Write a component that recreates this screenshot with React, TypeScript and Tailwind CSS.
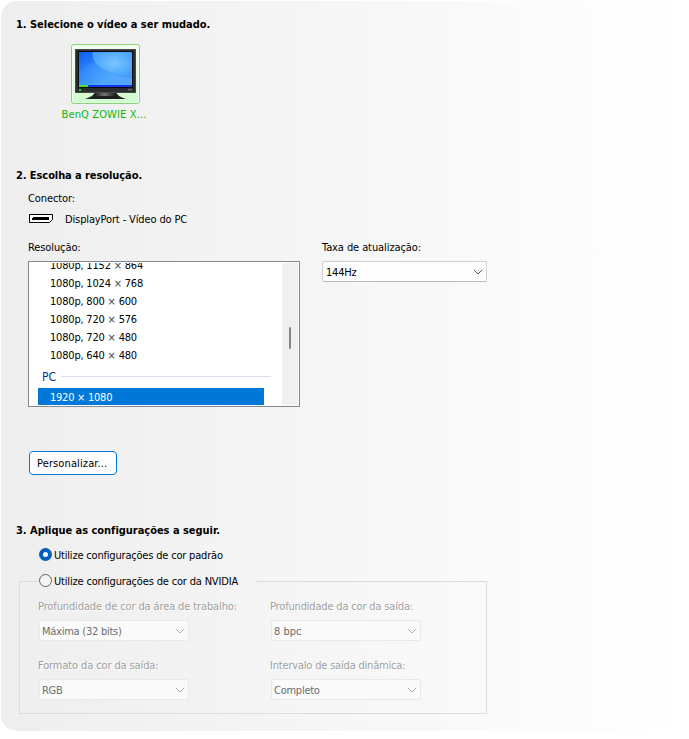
import type { ReactNode } from "react";

const resolutions: [string, string][] = [
  ["1080p, 1152", "864"],
  ["1080p, 1024", "768"],
  ["1080p, 800", "600"],
  ["1080p, 720", "576"],
  ["1080p, 720", "480"],
  ["1080p, 640", "480"],
];

function Chevron({ className }: { className: string }) {
  return (
    <svg width="10" height="6" viewBox="0 0 10 6" fill="none" className={className}>
      <path d="M0.8 0.8L5 5L9.2 0.8" stroke="currentColor" strokeWidth="1" />
    </svg>
  );
}

function Heading({ children, className }: { children: ReactNode; className: string }) {
  return <h2 className={`ml-[15px] h-4 text-[11px] leading-[18px] font-bold ${className}`}>{children}</h2>;
}

function DisabledField({ label, value, labelClass, valueClass }: { label: string; value: string; labelClass: string; valueClass: string }) {
  return (
    <div className="w-[232px] shrink-0">
      <div className={`h-4 text-[#a0a0a0] [text-shadow:1px_1px_0_#fff] ${labelClass}`}>{label}</div>
      <div className="mt-[6px] ml-px flex h-[21px] w-[150px] items-center justify-between rounded-[2px] border border-[#e9e9e9] bg-[#fafafa] pr-[3px] pl-[2px] text-[#6d6d6d]">
        <span className={`pt-[2px] ${valueClass}`}>{value}</span>
        <Chevron className="text-[#b0b0b0]" />
      </div>
    </div>
  );
}

function Monitor() {
  return (
    <svg width="61" height="50" viewBox="0 0 61 50">
      <defs>
        <linearGradient id="screen" x1="0" y1="0" x2="0.9" y2="1">
          <stop offset="0" stopColor="#0f5cf2" />
          <stop offset="0.35" stopColor="#2a84fb" />
          <stop offset="0.7" stopColor="#3f9ffc" />
          <stop offset="1" stopColor="#2f88f5" />
        </linearGradient>
        <radialGradient id="glow" cx="0.55" cy="0.45" r="0.6">
          <stop offset="0" stopColor="#7ac5ff" />
          <stop offset="1" stopColor="#42a0fc" />
        </radialGradient>
        <linearGradient id="sweep" x1="0" y1="0" x2="1" y2="0">
          <stop offset="0" stopColor="#7bbcff" stopOpacity="0.05" />
          <stop offset="1" stopColor="#7bc2ff" stopOpacity="0.5" />
        </linearGradient>
        <linearGradient id="stand" x1="0" y1="0" x2="1" y2="0">
          <stop offset="0" stopColor="#111" />
          <stop offset="0.45" stopColor="#777" />
          <stop offset="1" stopColor="#111" />
        </linearGradient>
        <clipPath id="clip">
          <rect x="4" y="3" width="53" height="35" />
        </clipPath>
      </defs>
      <path d="M20 43H41C42 46 45 48 51 50H10C16 48 19 46 20 43Z" fill="#202020" />
      <path d="M21 44H40L42 47H19Z" fill="url(#stand)" />
      <rect width="61" height="44" fill="#2b2c2e" />
      <rect x="0.5" y="0.5" width="60" height="43" fill="none" stroke="#48494c" />
      <rect x="3" y="2" width="55" height="37" fill="#0b0c12" />
      <g clipPath="url(#clip)">
        <rect x="4" y="3" width="53" height="35" fill="url(#screen)" />
        <path d="M18 3C15 13 27 25 57 28V3Z" fill="url(#glow)" />
        <path d="M4 22C10 17 15 14 20 13C25 20 37 27 57 29V36H4Z" fill="url(#sweep)" />
        <rect x="4" y="36" width="53" height="2" fill="#1238e8" />
        <rect x="4" y="36" width="9" height="2" fill="#4be22b" />
      </g>
      <rect x="4" y="40" width="2" height="2" fill="#1fd62c" />
      <rect x="53" y="40" width="4" height="1.5" fill="#666" />
    </svg>
  );
}

export default function App() {
  return (
    <main className="h-[739px] w-[689px] overflow-hidden bg-white pt-px pl-px font-['DejaVu_Sans_Condensed','DejaVu_Sans',sans-serif] text-[11px] leading-[18px] whitespace-nowrap text-black">
      <div className="flex h-[730px] flex-col rounded-l-[16px] bg-linear-to-r from-[#eeeeee] to-white pt-[15px]">
        <Heading className="tracking-[-0.03px]">1. Selecione o vídeo a ser mudado.</Heading>

        <div className="mt-[12px] ml-[54px] flex w-[100px] flex-col items-center">
          <div className="flex h-[60px] w-[69px] justify-center rounded-[3px] border border-[#86d773] bg-linear-to-b from-[#f2fff0] to-[#cffbcf] pt-[4px] shadow-[inset_0_0_0_1px_#f4fff3]">
            <Monitor />
          </div>
          <div className="mt-[2px] mr-[2px] h-4 tracking-[0.13px] text-[#0db80d]">BenQ ZOWIE X...</div>
        </div>

        <Heading className="mt-[45px] tracking-[-0.08px]">2. Escolha a resolução.</Heading>

        <div className="mt-[7px] ml-[27px] h-4 tracking-[-0.1px]">Conector:</div>
        <div className="mt-[5px] ml-[28px] flex h-4 items-center gap-[12px]">
          <svg width="24" height="9" viewBox="0 0 24 9" className="mb-px">
            <path d="M0.5 0.5H23.5V5.5L20.5 8.5H0.5Z" fill="#fff" stroke="#000" />
            <path d="M4 3H20V6H3V4H4Z" fill="#000" />
          </svg>
          <span className="pt-[2px] tracking-[-0.13px]">DisplayPort - Vídeo do PC</span>
        </div>

        <div className="mt-[12px] flex">
          <section className="ml-[27px] w-[294px]">
            <div className="h-4 tracking-[-0.1px]">Resolução:</div>
            <div className="mt-[6px] flex h-[146px] w-[272px] overflow-hidden border border-[#828790] bg-white p-px">
              <div className="h-[142px] w-[252px] overflow-hidden">
                <ul className="-mt-[7px]">
                  {resolutions.map(([mode, height], i) => (
                    <li key={i} className="h-[18px] pl-[20px] leading-[20px] tracking-[-0.2px]">
                      {mode} <span className="text-[#444]">×</span> {height}
                    </li>
                  ))}
                </ul>
                <div className="flex h-[24px] items-center gap-[5px] pl-[12px] text-[12px] text-[#003399]">
                  <span className="pt-[2px]">PC</span>
                  <div className="h-px w-[210px] bg-[#d5e0ec]" />
                </div>
                <div className="ml-[8px] h-[17px] w-[226px] bg-[#0078d7] pl-[12px] leading-[20px] tracking-[-0.25px] text-white">1920 × 1080</div>
              </div>
              <div className="flex h-[142px] w-[16px] justify-center bg-[#f0f0f0] pt-[64px]">
                <div className="h-[22px] w-[2px] rounded-full bg-[#858585]" />
              </div>
            </div>
          </section>
          <section>
            <div className="h-4 tracking-[-0.09px]">Taxa de atualização:</div>
            <div className="mt-[6px] flex h-[21px] w-[165px] items-center justify-between rounded-[2px] border border-[#d0d0d0] border-b-[#b8b8b8] bg-[#fdfdfd] pr-[3px] pl-[3px]">
              <span className="pt-[2px] tracking-[-0.2px]">144Hz</span>
              <Chevron className="text-[#5d5d5d]" />
            </div>
          </section>
        </div>

        <button className="mt-[44px] ml-[28px] flex h-[24px] w-[88px] shrink-0 items-center rounded-[4px] border border-[#0078d4] bg-[#fdfdfd] pt-[2px] pl-[7px] tracking-[0.12px]">
          Personalizar...
        </button>

        <Heading className="mt-[47px] tracking-[-0.03px]">3. Aplique as configurações a seguir.</Heading>

        <label className="mt-[8px] ml-[38px] flex h-4 items-center gap-[2px]">
          <span className="h-[13px] w-[13px] rounded-full border-4 border-[#005fb8] bg-white" />
          <span className="pt-[3px] tracking-[-0.19px]">Utilize configurações de cor padrão</span>
        </label>

        <div className="mt-[10px] ml-[18px] w-[468px]">
          <div className="mt-px flex h-4 items-center">
            <div className="h-px w-[20px] bg-[#dcdcdc]" />
            <label className="flex w-[216px] items-center gap-[2px]">
              <span className="mb-px h-[13px] w-[13px] rounded-full border border-[#626262] bg-[#f4f4f4]" />
              <span className="pt-px tracking-[-0.17px]">Utilize configurações de cor da NVIDIA</span>
            </label>
            <div className="h-px flex-1 bg-[#dcdcdc]" />
          </div>
          <div className="-mt-[8px] h-[133px] border border-t-0 border-[#dcdcdc] pt-[17px] pl-[18px]">
            <div className="flex">
              <DisabledField label="Profundidade de cor da área de trabalho:" value="Máxima (32 bits)" labelClass="tracking-[-0.12px]" valueClass="tracking-[-0.25px]" />
              <DisabledField label="Profundidade da cor da saída:" value="8 bpc" labelClass="tracking-[-0.17px]" valueClass="" />
            </div>
            <div className="mt-[16px] flex">
              <DisabledField label="Formato da cor da saída:" value="RGB" labelClass="tracking-[-0.12px]" valueClass="tracking-[-0.3px]" />
              <DisabledField label="Intervalo de saída dinâmica:" value="Completo" labelClass="tracking-[-0.19px]" valueClass="tracking-[-0.25px]" />
            </div>
          </div>
        </div>
      </div>
    </main>
  );
}
